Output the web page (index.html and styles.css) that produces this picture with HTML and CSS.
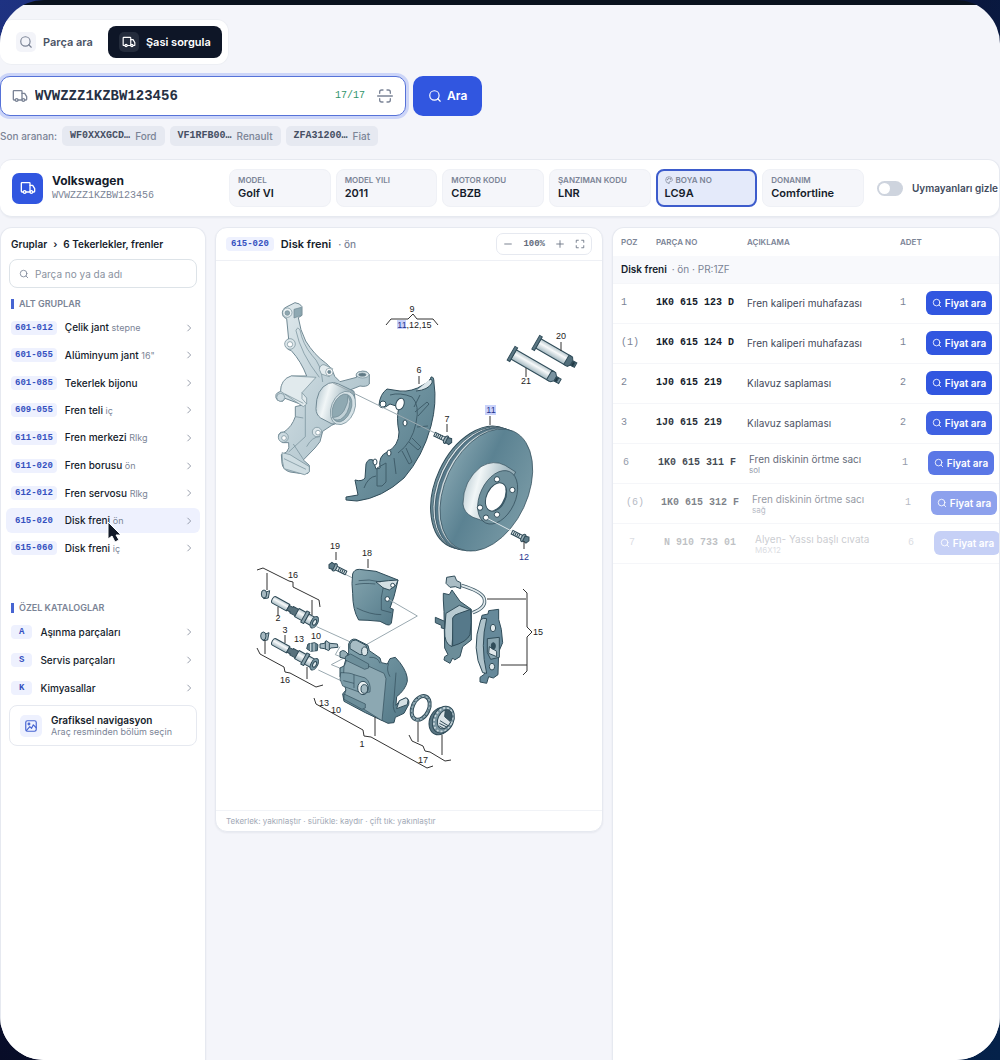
FILE: index.html
```html
<!DOCTYPE html>
<html lang="tr">
<head>
<meta charset="utf-8">
<meta name="viewport" content="width=device-width, initial-scale=1">
<title>Şasi sorgula</title>
<link rel="stylesheet" href="styles.css">
</head>
<body>
<svg class="defs" width="0" height="0" aria-hidden="true">
  <symbol id="i-search" viewBox="0 0 24 24"><circle cx="11" cy="11" r="8"/><path d="M21 21l-4.3-4.3"/></symbol>
  <symbol id="i-truck" viewBox="0 0 24 24"><path d="M5 18H3a1 1 0 0 1-1-1V5a1 1 0 0 1 1-1h11a1 1 0 0 1 1 1v13H9"/><path d="M15 8h4l3 5v4a1 1 0 0 1-1 1h-2"/><circle cx="7" cy="18" r="2"/><circle cx="17" cy="18" r="2"/></symbol>
  <symbol id="i-scan" viewBox="0 0 24 24"><path d="M4 8V6a3 3 0 0 1 3-3h2M15 3h2a3 3 0 0 1 3 3v2M20 16v2a3 3 0 0 1-3 3h-2M9 21H7a3 3 0 0 1-3-3v-2M1 12h22"/></symbol>
  <symbol id="i-chev" viewBox="0 0 24 24"><path d="M9 5l7 7-7 7"/></symbol>
  <symbol id="i-minus" viewBox="0 0 24 24"><path d="M4 12h16"/></symbol>
  <symbol id="i-plus" viewBox="0 0 24 24"><path d="M4 12h16M12 4v16"/></symbol>
  <symbol id="i-full" viewBox="0 0 24 24"><path d="M3 8V3h5M16 3h5v5M21 16v5h-5M8 21H3v-5"/></symbol>
  <symbol id="i-image" viewBox="0 0 24 24"><rect x="3" y="3" width="18" height="18" rx="3"/><circle cx="8.500" cy="8.500" r="1.500"/><path d="M4 20l6-7 3 3 3-6 5 5"/></symbol>
  <symbol id="i-palette" viewBox="0 0 24 24"><path d="M12 22a10 10 0 1 1 10-10c0 3-2 4-4 4h-3c-3 0-1 6-3 6z"/><circle cx="7" cy="11" r="1"/><circle cx="11" cy="7" r="1"/><circle cx="16" cy="9" r="1"/></symbol>
</svg>

<div class="shell">
  <nav class="tabs" aria-label="Arama türü">
    <button class="tab" type="button"><span class="tab-icon"><svg class="icon"><use href="#i-search"/></svg></span>Parça ara</button>
    <button class="tab tab-active" type="button"><span class="tab-icon"><svg class="icon"><use href="#i-truck"/></svg></span>Şasi sorgula</button>
  </nav>

  <form class="vin-form">
    <div class="vin-box">
      <svg class="icon icon-lg"><use href="#i-truck"/></svg>
      <input class="vin-input" type="text" value="WVWZZZ1KZBW123456" aria-label="Şasi numarası">
      <span class="vin-count">17/17</span>
      <button class="scan" type="button" aria-label="Tara"><svg class="icon icon-lg"><use href="#i-scan"/></svg></button>
    </div>
    <button class="vin-submit" type="button"><svg class="icon"><use href="#i-search"/></svg>Ara</button>
  </form>

  <div class="recent">
    <span>Son aranan:</span>
    <button class="chip" type="button"><b>WF0XXXGCD…</b>Ford</button>
    <button class="chip" type="button"><b>VF1RFB00…</b>Renault</button>
    <button class="chip" type="button"><b>ZFA31200…</b>Fiat</button>
  </div>

  <section class="vehicle">
    <div class="brand">
      <span class="brand-icon"><svg class="icon icon-lg"><use href="#i-truck"/></svg></span>
      <div><h1 class="brand-name">Volkswagen</h1><p class="brand-vin">WVWZZZ1KZBW123456</p></div>
    </div>
    <dl class="facts">
      <div class="fact"><dt>MODEL</dt><dd>Golf VI</dd></div>
      <div class="fact"><dt>MODEL YILI</dt><dd>2011</dd></div>
      <div class="fact"><dt>MOTOR KODU</dt><dd>CBZB</dd></div>
      <div class="fact"><dt>ŞANZIMAN KODU</dt><dd>LNR</dd></div>
      <div class="fact fact-active"><dt><svg class="icon icon-xs"><use href="#i-palette"/></svg>BOYA NO</dt><dd>LC9A</dd></div>
      <div class="fact"><dt>DONANIM</dt><dd>Comfortline</dd></div>
    </dl>
    <label class="switch"><input type="checkbox">Uymayanları gizle</label>
  </section>

  <main class="columns">
    <aside class="card groups">
      <div class="crumbs"><a href="#">Gruplar</a><span>›</span><a href="#">6 Tekerlekler, frenler</a></div>
      <div class="filter"><svg class="icon icon-sm"><use href="#i-search"/></svg><input type="text" placeholder="Parça no ya da adı" aria-label="Parça no ya da adı"></div>
      <h2 class="section-title">ALT GRUPLAR</h2>
      <ul class="list list-groups">
        <li><a href="#"><code>601-012</code><span>Çelik jant <small>stepne</small></span><svg class="icon icon-sm"><use href="#i-chev"/></svg></a></li>
        <li><a href="#"><code>601-055</code><span>Alüminyum jant <small>16"</small></span><svg class="icon icon-sm"><use href="#i-chev"/></svg></a></li>
        <li><a href="#"><code>601-085</code><span>Tekerlek bijonu</span><svg class="icon icon-sm"><use href="#i-chev"/></svg></a></li>
        <li><a href="#"><code>609-055</code><span>Fren teli <small>iç</small></span><svg class="icon icon-sm"><use href="#i-chev"/></svg></a></li>
        <li><a href="#"><code>611-015</code><span>Fren merkezi <small>Rlkg</small></span><svg class="icon icon-sm"><use href="#i-chev"/></svg></a></li>
        <li><a href="#"><code>611-020</code><span>Fren borusu <small>ön</small></span><svg class="icon icon-sm"><use href="#i-chev"/></svg></a></li>
        <li><a href="#"><code>612-012</code><span>Fren servosu <small>Rlkg</small></span><svg class="icon icon-sm"><use href="#i-chev"/></svg></a></li>
        <li><a class="current" href="#"><code>615-020</code><span>Disk freni <small>ön</small></span><svg class="icon icon-sm"><use href="#i-chev"/></svg></a>
          <svg class="pointer" viewBox="0 0 15 22" aria-hidden="true"><path d="M1 1v17l4-3 3 6 4-2-3-5h5z" fill="#111827" stroke="#fff" stroke-width="1"/></svg></li>
        <li><a href="#"><code>615-060</code><span>Disk freni <small>iç</small></span><svg class="icon icon-sm"><use href="#i-chev"/></svg></a></li>
      </ul>
      <h2 class="section-title section-later">ÖZEL KATALOGLAR</h2>
      <ul class="list list-catalogs">
        <li><a href="#"><code>A</code><span>Aşınma parçaları</span><svg class="icon icon-sm"><use href="#i-chev"/></svg></a></li>
        <li><a href="#"><code>S</code><span>Servis parçaları</span><svg class="icon icon-sm"><use href="#i-chev"/></svg></a></li>
        <li><a href="#"><code>K</code><span>Kimyasallar</span><svg class="icon icon-sm"><use href="#i-chev"/></svg></a></li>
      </ul>
      <button class="visual-nav" type="button"><span class="visual-icon"><svg class="icon"><use href="#i-image"/></svg></span><span><b>Grafiksel navigasyon</b><small>Araç resminden bölüm seçin</small></span></button>
    </aside>

    <section class="card diagram">
      <header class="diagram-head">
        <code>615-020</code><h2>Disk freni</h2><span class="muted">· ön</span>
        <div class="zoom">
          <button type="button" aria-label="Uzaklaştır"><svg class="icon icon-sm"><use href="#i-minus"/></svg></button>
          <output>100%</output>
          <button type="button" aria-label="Yakınlaştır"><svg class="icon icon-sm"><use href="#i-plus"/></svg></button>
          <button type="button" aria-label="Tam ekran"><svg class="icon icon-sm"><use href="#i-full"/></svg></button>
        </div>
      </header>
      <svg class="drawing" viewBox="216 261 386 549" role="img" aria-label="Disk freni parça çizimi">
        <defs>
          <linearGradient id="lt" x1="0" y1="0" x2="1" y2="1"><stop offset="0" stop-color="#e2ebee"/><stop offset=".5" stop-color="#bfd0d7"/><stop offset="1" stop-color="#a5bcc5"/></linearGradient>
          <linearGradient id="cyl" x1="0" y1="0" x2="1" y2=".3"><stop offset="0" stop-color="#a9bec7"/><stop offset=".35" stop-color="#f1f6f7"/><stop offset="1" stop-color="#86a2ad"/></linearGradient>
          <linearGradient id="dk" x1="0" y1="0" x2="1" y2="1"><stop offset="0" stop-color="#86a5af"/><stop offset=".5" stop-color="#6b8f9c"/><stop offset="1" stop-color="#527786"/></linearGradient>
          <linearGradient id="disc" x1="0" y1="0" x2="1" y2="0"><stop offset="0" stop-color="#7d9eaa"/><stop offset=".4" stop-color="#5b8292"/><stop offset="1" stop-color="#7597a3"/></linearGradient>
          <linearGradient id="tube" x1="0" y1="0" x2="0" y2="1"><stop offset="0" stop-color="#b4c5cb"/><stop offset=".4" stop-color="#f7f9fa"/><stop offset="1" stop-color="#a3b8c0"/></linearGradient>
          <g id="pin" stroke="#2e4956" stroke-width="3">
            <path d="M6-11h48v22H6a6 11 0 0 1 0-22z" fill="url(#tube)"/>
            <path d="M54-8h12v-3h20v22H66V8H54z" fill="#58717c"/>
            <path d="M84-14h28v28H84z" fill="url(#tube)"/>
            <path d="M108-19h10v38h-10z" fill="#89a1ab"/>
            <path d="M118-14h24v28h-24z" fill="url(#tube)"/>
            <ellipse cx="144" cy="0" rx="10" ry="19" fill="#7794a0"/><ellipse cx="145" cy="0" rx="5" ry="9" fill="#dfe8eb"/>
          </g>
          <g id="bolt" stroke="#2e4956" stroke-width="3"><path d="M-38-6H0V6h-38z" fill="#dbe5e8"/><path d="M-32-6v12M-26-6v12M-20-6v12M-14-6v12"/><ellipse rx="6" ry="12" fill="#99adb5"/><path d="M2-8l12-2 5 10-5 10-12-2z" fill="#5d7a87"/></g>
        </defs>

        <!-- steering knuckle -->
        <g transform="translate(240 290) scale(.3333)" stroke="#708994" stroke-width="2" stroke-linejoin="round">
          <path fill="url(#lt)" stroke-width="3" d="M127 66Q129 54 141 50L165 38Q181 40 186 50V76L175 83Q180 120 197 153Q223 195 257 219Q277 235 284 259L300 275L350 262Q346 250 356 246Q380 238 388 254V282Q380 292 360 288L330 300V380L275 406L248 424L240 455L225 474L190 510L208 526V542L204 550L192 552L150 546Q128 540 126 520L124 494L140 486Q150 475 146 458L128 458Q112 448 116 434Q120 424 132 426Q156 410 166 380V350L188 345L135 325L128 334Q104 334 108 314Q110 308 122 304Q122 268 154 258L200 258Q184 215 154 182Q136 178 136 160Q138 150 146 148L140 86Q126 82 127 66Z"/>
          <path fill="none" d="M238 262Q182 190 168 122Q172 108 180 120Q188 162 216 196Q244 222 248 276M156 260Q190 262 220 266M196 345V440L146 486M166 380L190 384M160 462L190 508M240 440Q216 440 200 470"/>
          <path fill="#e1eaed" d="M154 258L228 262L186 308L200 324L200 342L190 350L122 304Q122 268 154 258Z"/>
          <path fill="none" d="M135 312L190 340M186 308V326L200 342"/>
          <path fill="#cfdde2" d="M126 488L150 494L208 530V546L194 554L132 536Q126 516 126 488ZM132 506L198 538"/>
          <circle cx="142" cy="68" r="14" fill="#eaf1f3"/><circle cx="142" cy="69" r="7" fill="#8fa7b0"/>
          <path fill="#8fa9b3" d="M162 58l22-6v24l-22 8z"/>
          <circle cx="150" cy="162" r="16" fill="#dce6ea"/><circle cx="150" cy="163" r="8" fill="#fff"/>
          <path fill="#e4ecef" d="M238 238q2-14 14-14l26 12-10 24-24-8z"/><circle cx="268" cy="246" r="11" fill="#fff"/><circle cx="268" cy="246" r="5" fill="#708b97"/>
          <ellipse cx="368" cy="254" rx="19" ry="10" fill="#dce6ea"/><ellipse cx="367" cy="254" rx="11" ry="5" fill="#607985"/>
          <circle cx="122" cy="322" r="12" fill="#ccdae0"/><circle cx="130" cy="442" r="15" fill="#ccdae0"/><circle cx="132" cy="444" r="7" fill="#fff"/>
          <circle cx="231" cy="426" r="14" fill="#dce6ea"/><circle cx="234" cy="428" r="7" fill="#fff"/>
          <path fill="url(#cyl)" stroke-width="3" d="M228 356q0-60 38-76 14-6 30 2l46 22q10 40-16 72-20 28-50 26l-34-18q-14-10-14-28z"/>
          <ellipse cx="309" cy="354" rx="35" ry="52" transform="rotate(22 309 354)" fill="#d6e2e6"/>
          <ellipse cx="306" cy="354" rx="27" ry="44" transform="rotate(22 306 354)" fill="#8fa9b2"/>
          <path fill="#c1d1d7" d="M276 382q22 2 36-20 14-24 12-46l6 18q-4 40-28 54-18 6-26-6z"/>
        </g>

        <!-- splash shield -->
        <g stroke="#304c59" stroke-linejoin="round">
          <path fill="url(#dk)" d="M379 405q1-11 8-16l13 2q12 1 23-6 8-4 8-8 3-1 3 6 3 20-3 43-8 30-27 52-22 20-47 23l-11-1v-3l12-2-3-15q7 2 10-2l1-14q2-6 7-4l3 9 4-1q-2-12 7-16 12-6 12-20-3-14 0-25l-9-3q-9 7-11 1z"/>
          <path fill="none" stroke="#405e6b" d="M390 395q10-3 22 2 8 8 4 26-4 20-18 30M415 412l12-10 2 2-11 12M417 427l11-1M412 438l9 9-3 3-9-8M402 451l7 13 3-2-6-14M394 458l2 16M364 488q4-11 12-12M377 486v-18l9-5v19l-4 4zM414 407l6-12"/>
          <g fill="#fff"><ellipse cx="400" cy="404" rx="4" ry="6" transform="rotate(20 400 404)"/><ellipse cx="405" cy="423" rx="2" ry="3"/><ellipse cx="389" cy="453" rx="2" ry="3"/><ellipse cx="375" cy="462" rx="2" ry="3"/><circle cx="383" cy="404" r="3"/></g>
          <path d="M429 380q4-2 3 3-4 7-16 8" fill="#dce6ea"/>
        </g>
        <path d="M333 383L437 434" stroke="#9aa9b0"/>

        <!-- brake disc, bolts and tubes -->
        <g transform="translate(390 310) scale(.3333)" stroke="#304c59" stroke-width="3">
          <ellipse cx="262" cy="533" rx="125" ry="195" transform="rotate(25 262 533)" fill="#6c8d99"/>
          <ellipse cx="269" cy="535" rx="125" ry="195" transform="rotate(25 269 535)" fill="#dce6ea" stroke-width="2"/>
          <ellipse cx="275" cy="537" rx="125" ry="195" transform="rotate(25 275 537)" fill="#56798a" stroke-width="2"/>
          <ellipse cx="284" cy="539" rx="125" ry="194" transform="rotate(25 284 539)" fill="#d3dfe3" stroke-width="1"/>
          <ellipse cx="289" cy="540" rx="124" ry="194" transform="rotate(25 289 540)" fill="url(#disc)" stroke-width="2"/>
          <path fill="url(#cyl)" stroke-width="2" d="M219 582q0-70 54-112 38-22 72-4l32 20-82 152-46-16q-28-14-30-40z"/>
          <ellipse cx="323" cy="562" rx="53" ry="85" transform="rotate(25 323 562)" fill="#6e8f9b" stroke-width="2"/>
          <ellipse cx="318" cy="561" rx="28" ry="45" transform="rotate(25 318 561)" fill="#fff"/>
          <path d="M344 528q8 24-8 50-10 18-30 24 24 2 36-22 16-28 2-52z" fill="#3b5967" stroke="none"/>
          <g fill="#fff"><circle cx="321" cy="508" r="8"/><circle cx="367" cy="540" r="8"/><circle cx="270" cy="593" r="8"/><circle cx="288" cy="623" r="8"/><circle cx="321" cy="614" r="8"/></g>
          <path d="M290 624l82 43" stroke="#dce4e7"/>
          <use href="#bolt" transform="translate(168 389) rotate(26)"/><use href="#bolt" transform="translate(400 684) rotate(27)"/>
          <g transform="translate(370 134) rotate(30)"><path fill="url(#tube)" d="M0-17h132v32H0z"/><path fill="#5b7784" d="M-8-24h9v47h-9z"/><path fill="#7892a0" d="M124-17h13l8 9V7l-8 8h-13zM145-8h16V7h-16z"/><path fill="#1e3541" d="M146-6h7V7h-7z"/></g>
          <g transform="translate(444 101) rotate(30)"><path fill="url(#tube)" d="M0-17h105v32H0z"/><path fill="#5b7784" d="M-8-24h9v47h-9z"/><path fill="#526e7b" d="M98-17h12l6 9V7l-6 8H98zM116-8h14V7h-14z"/><path fill="#1e3541" d="M118-6h7V7h-7z"/></g>
        </g>

        <!-- caliper, pins and heat shield -->
        <g transform="translate(240 530) scale(.3333)" stroke="#304c59" stroke-width="3" stroke-linejoin="round">
          <path d="M230 290l110 50M235 420l80 38M302 126l44 22" stroke="#9aa9b0"/>
          <path fill="url(#dk)" d="M338 132Q342 118 358 118L408 124L474 150L470 168L462 200L450 234L460 238L454 280Q448 288 440 284L420 274Q380 270 356 270Q338 240 338 190Q334 160 338 132Z"/>
          <path fill="#d4e0e4" d="M408 156l38-4 28-2-6 16-20 14-18-6z"/>
          <path fill="none" stroke-width="2" d="M356 152q30-6 66 4M350 234q40 20 74 20M346 164q22-6 60-2M430 172l-6 30v38l30 8"/>
          <circle cx="458" cy="166" r="6" fill="#fff"/><circle cx="442" cy="207" r="7" fill="#fff"/>
          <path d="M446 208l86 50-160 90M300 350l-14 24 26 10-38 20 40 16" stroke="#9aa9b0" fill="none"/>
          <use href="#pin" transform="translate(97 207) rotate(29)"/><use href="#pin" transform="translate(97 333) rotate(29)"/>
          <g fill="#a6b9c1"><path d="M74 188l15-6-4 22-14 2z"/><ellipse cx="72" cy="192" rx="8" ry="12"/><path d="M72 314l15-6-4 22-14 2z"/><ellipse cx="70" cy="318" rx="8" ry="12"/></g>
          <use href="#bolt" transform="translate(284 112) rotate(206)"/>
          <path fill="#607d8a" d="M204 342l20-4 10 6-2 18-20 2-12-8z"/><path d="M212 340v24M222 340v24" stroke="#dce6ea"/>
          <path fill="#a9bcc4" d="M240 342l14-2 4-8 12 8 22 2 2 10-22 2-6 8-12-6-14-2z"/><path d="M256 334v24M268 340v20"/>
          <path fill="url(#dk)" d="M326 342Q332 324 348 328L384 346L388 362L420 384L424 398L442 402L450 386L466 382L480 398Q504 430 502 454Q496 480 470 500L468 526L478 514L496 504Q510 506 506 524L492 550L466 562L462 578L444 580L376 548L312 514L308 492L318 480L310 452L300 440V414L312 408L318 386L326 372Z"/>
          <path fill="#8ca8b2" stroke-width="2" d="M324 380L432 430L438 446L426 572L312 500L318 480L310 452L312 410Z"/>
          <path fill="#a7bcc4" d="M330 342q6-14 18-12l30 16q8 12-2 26l-16 2-30-18z"/><ellipse cx="374" cy="364" rx="9" ry="13" fill="#dbe6e9"/>
          <path fill="#95adb6" d="M300 366q8-8 16-2l8 8-8 14-16-4z"/>
          <path fill="#6d8f9b" stroke-width="2" d="M316 380l16-8 54 30v12l-12 4-58-28zM312 492l64 30v12l-10 4-54-30z"/>
          <path fill="#7c9ca8" stroke-width="2" d="M302 428q30 0 40 6l34 10q18 14 14 42l-22 4-60-22-8-20z"/><path fill="none" stroke-width="2" d="M342 434v40M310 452l32 8"/>
          <ellipse cx="369" cy="474" rx="16" ry="20" fill="#e7eef0"/><ellipse cx="373" cy="477" rx="10" ry="13" fill="#a4bac2"/>
          <path fill="none" stroke-width="2" d="M468 428l-6 80q-6 24 4 40M446 400q-8 20 4 40M388 382q26-2 32 18"/>
          <path fill="#d4e0e4" d="M478 512l18-8q8-2 8 8l-2 12-32 12z"/>
        </g>

        <!-- pads and seal rings -->
        <g transform="translate(390 550) scale(.3333)" stroke="#304c59" stroke-width="3" stroke-linejoin="round">
          <path d="M214 106q60 18 68 38 10 28-34 44" fill="none" stroke="#415c69" stroke-width="10"/>
          <path d="M214 106q60 18 68 38 10 28-34 44" fill="none" stroke="#e1e9ec" stroke-width="5"/>
          <path fill="#6c8d99" d="M160 130l18 4 8-14 24 34 34 24v92l-26 20-8 30-16 10-6-6-8 16-18-10 2-10 10-6-10-20-2-110-2-34z"/>
          <path fill="#b8cbd2" d="M168 190l40-24 34 14-50 20-6 90q-24-8-22-50z"/>
          <path fill="#56798a" d="M188 204q4-10 20-14l34-12q4 40-2 76-10 22-52 34z"/>
          <path fill="#607f8c" d="M136 202l28 12v22l-10-2v-8l-18-8z"/>
          <path fill="#a9bcc4" d="M170 82l24-4 6 14 12 6v18l-16-6-16 2-12-12z"/>
          <path fill="#66899a" d="M276 196l18-4 2-10 30-4v30l8 30 4 40-12 28-2 68-14 10-14-4-6 20-20-4v-14l14-10q-28-50-20-120z"/>
          <path fill="#afc3cb" d="M272 210q6-8 18-4-20 80 0 164l-12-2q-36-70-6-158z"/>
          <path fill="#8aa6b1" d="M292 266l36-4v60l-26 6-10-20z"/><path fill="#e1e9ec" d="M298 290l22 14v16l-24-10z"/>
          <g fill="#e1e9ec"><ellipse cx="309" cy="234" rx="8" ry="11"/><ellipse cx="306" cy="350" rx="8" ry="10"/></g><ellipse cx="310" cy="288" rx="6" ry="10" fill="#304c59"/>
          <ellipse cx="92" cy="474" rx="29" ry="42" transform="rotate(25 92 474)" fill="#91aab4"/><ellipse cx="92" cy="474" rx="20" ry="33" transform="rotate(25 92 474)" fill="#fff"/>
          <ellipse cx="92" cy="474" rx="25" ry="38" transform="rotate(25 92 474)" fill="none" stroke-width="4" stroke-dasharray="3 9"/>
          <ellipse cx="152" cy="513" rx="33" ry="43" transform="rotate(25 152 513)" fill="#5a7683"/><ellipse cx="160" cy="509" rx="31" ry="42" transform="rotate(25 160 509)" fill="#7894a0"/>
          <ellipse cx="160" cy="509" rx="26" ry="37" transform="rotate(25 160 509)" fill="none" stroke="#c9d6db" stroke-width="5" stroke-dasharray="6 6"/>
          <ellipse cx="164" cy="508" rx="20" ry="30" transform="rotate(25 164 508)" fill="#dbe4e8"/>
          <path d="M166 480q20-2 20 20l-6 14-16-14zM150 512l26 16M148 520l24 12M148 528l18 10" fill="#3c5764"/>
        </g>

        <!-- leaders and brackets -->
        <g fill="none" stroke="#333">
          <path d="M386 325l5-6h17l5-5 4 5h16l5 6M419 376v8M561 342v9M526 368v9M447 424v8M490 416v9M524 541v8M336 552v8M368 559v9M278 607v9M285 635v8"/>
          <path d="M257 570l6-2 26 13 4 1v5l26 13 1 7M267 573v17M312 600v15M257 648l3 6 24 13 1 5 5 1 26 14 7-2M265 640v14M307 667v12M314 698l2 6 47 26 1 6 7 1 56 31 6-2M375 717v19M409 735l3 6 11 5 2 5 5 1 15 9 6-1M418 722v20M442 735v20"/>
          <path d="M523 589l4 4v34l5 5-5 5v34l-4 4M487 599h39M501 665h26"/>
        </g>
        <g class="marks"><rect x="397" y="320" width="9" height="9"/><rect x="485" y="405" width="11" height="10"/></g>
        <g class="callouts">
          <text x="412" y="312">9</text><text class="hot" x="402" y="328">11</text><text x="419" y="328">,12,15</text><text x="561" y="339">20</text><text x="526" y="384">21</text><text x="419" y="373">6</text><text x="447" y="422">7</text><text class="hot" x="491" y="413">11</text><text class="hot" x="524" y="560">12</text>
          <text x="335" y="549">19</text><text x="367" y="556">18</text><text x="293" y="578">16</text><text x="278" y="621">2</text><text x="285" y="633">3</text><text x="299" y="642">13</text><text x="316" y="639">10</text><text x="285" y="683">16</text><text x="324" y="706">13</text><text x="336" y="713">10</text><text x="362" y="747">1</text><text x="423" y="763">17</text><text x="538" y="635">15</text>
        </g>
      </svg>
      <footer class="diagram-foot">Tekerlek: yakınlaştır · sürükle: kaydır · çift tık: yakınlaştır</footer>
    </section>

    <section class="card parts">
      <table>
        <colgroup><col class="c-pos"><col class="c-no"><col><col class="c-qty"><col class="c-act"></colgroup>
        <thead><tr><th>POZ</th><th>PARÇA NO</th><th>AÇIKLAMA</th><th>ADET</th><th></th></tr></thead>
        <tbody>
          <tr class="group-row"><td colspan="5"><b>Disk freni</b> · ön · PR:1ZF</td></tr>
          <tr><td>1</td><td>1K0 615 123 D</td><td>Fren kaliperi muhafazası</td><td>1</td><td><button type="button"><svg class="icon icon-sm"><use href="#i-search"/></svg>Fiyat ara</button></td></tr>
          <tr><td>(1)</td><td>1K0 615 124 D</td><td>Fren kaliperi muhafazası</td><td>1</td><td><button type="button"><svg class="icon icon-sm"><use href="#i-search"/></svg>Fiyat ara</button></td></tr>
          <tr><td>2</td><td>1J0 615 219</td><td>Kılavuz saplaması</td><td>2</td><td><button type="button"><svg class="icon icon-sm"><use href="#i-search"/></svg>Fiyat ara</button></td></tr>
          <tr class="enter-4"><td>3</td><td>1J0 615 219</td><td>Kılavuz saplaması</td><td>2</td><td><button type="button"><svg class="icon icon-sm"><use href="#i-search"/></svg>Fiyat ara</button></td></tr>
          <tr class="enter-3"><td>6</td><td>1K0 615 311 F</td><td>Fren diskinin örtme sacı<small>sol</small></td><td>1</td><td><button type="button"><svg class="icon icon-sm"><use href="#i-search"/></svg>Fiyat ara</button></td></tr>
          <tr class="enter-2"><td>(6)</td><td>1K0 615 312 F</td><td>Fren diskinin örtme sacı<small>sağ</small></td><td>1</td><td><button type="button"><svg class="icon icon-sm"><use href="#i-search"/></svg>Fiyat ara</button></td></tr>
          <tr class="enter-1"><td>7</td><td>N 910 733 01</td><td>Alyen- Yassı başlı cıvata<small>M6X12</small></td><td>6</td><td><button type="button"><svg class="icon icon-sm"><use href="#i-search"/></svg>Fiyat ara</button></td></tr>
        </tbody>
      </table>
    </section>
  </main>
</div>
</body>
</html>
```
FILE: styles.css
```css
:root {
  --ink: #151c2b;
  --muted: #7b8496;
  --line: #e6e9f0;
  --blue: #3156e0;
  --tint: #eef1fe;
  --mono: "Liberation Mono", monospace;
}
* { box-sizing: border-box; }
body {
  margin: 0;
  background: radial-gradient(circle at 0 0, #1e3282 0, #0d1238 60%, transparent 80%), linear-gradient(90deg, #050a1e, #05224a);
  background-color: #050a1e;
  color: var(--ink);
  font: 500 10px/14px Inter, sans-serif;
}
h1, h2, p, ul, dl, dd { margin: 0; padding: 0; }
ul { list-style: none; }
a { color: inherit; text-decoration: none; }
button, input { font: inherit; color: inherit; }
button { border: 0; background: none; padding: 0; display: inline-flex; align-items: center; }
small { font-size: 9px; font-weight: 400; color: var(--muted); }
code { font: 700 9px/14px var(--mono); color: #3450c0; background: var(--tint); border-radius: 4px; padding: 0 4px; }
.defs { position: absolute; }
.icon { width: 14px; height: 14px; flex: none; fill: none; stroke: currentColor; stroke-width: 2; stroke-linecap: round; stroke-linejoin: round; }
.icon-lg { width: 16px; height: 16px; }
.icon-sm { width: 10px; height: 10px; }
.icon-xs { width: 8px; height: 8px; }

.shell {
  min-height: 100vh;
  display: flex;
  flex-direction: column;
  overflow: hidden;
  border-radius: 44px;
  background: linear-gradient(#0a121e 5px, #f4f5fa 5px);
  padding-top: 19px;
}

.tabs { align-self: flex-start; display: flex; gap: 4px; padding: 6px 6px 6px 5px; background: #fff; border: 1px solid #edeff4; border-left: 0; border-radius: 12px; }
.tab { height: 32px; padding: 0 11px; gap: 7px; border-radius: 8px; font-weight: 600; font-size: 11px; color: #4a5365; }
.tab-icon { display: grid; place-items: center; width: 20px; height: 20px; border-radius: 5px; background: #f3f4f9; color: var(--muted); }
.tab-active { background: #0e1627; color: #fff; }
.tab-active .tab-icon { background: #242c3c; color: #fff; }

.vin-form { display: flex; gap: 7px; margin-top: 11px; }
.vin-box { flex: 0 1 406px; height: 40px; display: flex; align-items: center; gap: 7px; padding: 0 12px 0 11px; background: #fff; border: 1px solid #5672d8; border-radius: 10px; box-shadow: 0 0 0 3px #ccd5f8; color: var(--muted); }
.vin-input { flex: 1; min-width: 0; border: 0; outline: 0; padding: 0; background: none; font: 700 14px/20px var(--mono); color: #263043; }
.vin-count { font: 400 10px/14px var(--mono); color: #2f9468; }
.scan { margin-left: 5px; }
.vin-submit { gap: 5px; height: 40px; padding: 0 15px; border-radius: 10px; background: var(--blue); color: #fff; font-size: 12px; font-weight: 600; }

.recent { display: flex; align-items: center; gap: 5px; margin-top: 10px; color: var(--muted); }
.chip { height: 20px; padding: 0 8px; gap: 5px; border-radius: 5px; background: #e6e9f1; }
.chip b { font: 700 10px/14px var(--mono); color: #465064; }

.vehicle { display: flex; align-items: center; margin-top: 13px; padding: 9px 1px 9px 12px; background: #fff; border: 1px solid var(--line); border-left: 0; border-radius: 12px; box-shadow: 0 1px 2px #1c2a4a10; }
.brand { flex: 0 0 217px; display: flex; align-items: center; gap: 9px; }
.brand-icon { display: grid; place-items: center; width: 31px; height: 31px; border-radius: 7px; background: var(--blue); color: #fff; }
.brand-name { font-size: 12px; line-height: 16px; font-weight: 700; }
.brand-vin { font: 400 10px/14px var(--mono); color: var(--muted); }
.facts { flex: 1; display: grid; grid-template-columns: repeat(6, minmax(0, 1fr)); gap: 5px; }
.fact { height: 38px; padding: 4px 8px; border: 1px solid #eff1f6; border-radius: 8px; background: #f5f6fa; }
.fact dt { display: flex; align-items: center; gap: 3px; font-size: 8px; line-height: 12px; font-weight: 600; color: var(--muted); white-space: nowrap; }
.fact dd { font-size: 11px; line-height: 14px; font-weight: 600; }
.fact-active { border: 2px solid #3d5ccc; padding: 3px 7px; background: #e4eafa; }
.switch { display: flex; align-items: center; gap: 9px; margin-left: 13px; font-weight: 600; color: #424b5d; white-space: nowrap; }
.switch input { appearance: none; margin: 0; width: 26px; height: 15px; border-radius: 8px; background: #ced4de; padding: 2px; }
.switch input::before { content: ""; display: block; width: 11px; height: 11px; border-radius: 50%; background: #fff; }

.columns { flex: 1; display: grid; grid-template-columns: minmax(0, 206fr) minmax(0, 388fr) minmax(0, 388fr); gap: 9px; margin-top: 10px; }
.card { background: #fff; border: 1px solid var(--line); border-radius: 12px; box-shadow: 0 1px 2px #1c2a4a10; overflow: hidden; }
.groups { border-radius: 12px 12px 0 0; border-bottom: 0; padding: 9px 5px 0; }
.crumbs { display: flex; gap: 6px; padding: 0 5px; font-weight: 600; }
.filter { display: flex; align-items: center; gap: 6px; margin: 8px 3px 0; height: 29px; padding: 0 9px; border: 1px solid #dde3e8; border-radius: 8px; color: var(--muted); }
.filter input { flex: 1; min-width: 0; border: 0; outline: 0; padding: 0; background: none; font-weight: 400; }
.filter input::placeholder { color: #8a92a0; opacity: 1; }
.section-title { margin: 11px 5px 0; padding-left: 5px; border-left: 3px solid #4765d2; font-size: 9px; line-height: 10px; font-weight: 600; color: var(--muted); }
.section-later { margin-top: 42px; }
.list { display: grid; grid-auto-rows: 1fr; gap: 2px; margin-top: 6px; }
.list-groups { min-height: 246px; }
.list-catalogs { min-height: 82px; }
.list li { position: relative; display: grid; }
.list a { display: flex; align-items: center; gap: 8px; padding: 0 6px 0 5px; border-radius: 6px; font-size: 10px; white-space: nowrap; }
.list span { flex: 1; }
.list .icon { color: #848c9c; }
.list .current { background: var(--tint); }
.list-catalogs code { padding: 0 8px; }
.pointer { position: absolute; left: 101px; top: 13px; width: 15px; height: 22px; z-index: 1; }
.visual-nav { display: flex; gap: 9px; margin: 4px 3px 0; width: calc(100% - 6px); height: 41px; padding: 0 10px; border: 1px solid var(--line); border-radius: 8px; text-align: left; }
.visual-icon { display: grid; place-items: center; width: 22px; height: 22px; border-radius: 5px; background: var(--tint); color: #4765d2; }
.visual-nav b, .visual-nav small { display: block; line-height: 12px; white-space: nowrap; }
.visual-nav b { font-weight: 600; }

.diagram { align-self: start; }
.diagram-head { height: 33px; display: flex; align-items: center; gap: 7px; padding: 0 10px; border-bottom: 1px solid #eef0f5; }
.diagram-head h2 { font-size: 11px; font-weight: 600; }
.diagram-head code { padding: 0 5px; }
.muted { color: var(--muted); }
.zoom { margin-left: auto; display: flex; align-items: center; gap: 10px; height: 22px; padding: 0 6px; border: 1px solid var(--line); border-radius: 7px; color: #626b7c; }
.zoom output { font: 700 9px/14px var(--mono); }
.drawing { display: block; width: 100%; height: auto; }
.callouts { font: 400 9px "Liberation Sans", sans-serif; text-anchor: middle; fill: #222; }
.callouts .hot { fill: #26358f; }
.marks { fill: #c9d2fa; }
.diagram-foot { height: 21px; padding: 0 10px; border-top: 1px solid #f1f3f7; font-size: 8px; line-height: 20px; font-weight: 400; color: #a2a9b6; }

.parts { border-radius: 12px 12px 0 0; border-bottom: 0; }
.parts table { width: 100%; table-layout: fixed; border-collapse: collapse; }
.c-pos { width: 35px; }
.c-no { width: 91px; }
.c-qty { width: 26px; }
.c-act { width: 81px; }
.parts th { height: 28px; padding: 0 0 0 8px; text-align: left; font-size: 8px; font-weight: 600; color: var(--muted); }
.parts td { height: 40px; padding: 0 0 0 8px; border-bottom: 1px solid #f5f6f9; white-space: nowrap; font-weight: 400; }
.parts td:nth-child(1), .parts td:nth-child(4) { font-family: var(--mono); color: var(--muted); }
.parts td:nth-child(2) { font: 700 10px/14px var(--mono); }
.parts td:nth-child(3) { color: #3d4657; }
.parts td small { display: block; font-size: 8px; line-height: 9px; }
.parts .group-row td { height: 27px; background: #f8f9fc; font: 400 10px/14px Inter, sans-serif; color: var(--muted); }
.group-row b { font-weight: 600; color: var(--ink); margin-right: 2px; }
.parts button { height: 24px; width: 66px; justify-content: center; gap: 3px; border-radius: 6px; background: var(--blue); color: #fff; font-size: 10px; font-weight: 600; }
.enter-4 { opacity: .93; }
.enter-3 { opacity: .8; transform: translateX(2px); }
.enter-2 { opacity: .55; transform: translateX(5px); }
.enter-1 { opacity: .27; transform: translateX(8px); }
```
